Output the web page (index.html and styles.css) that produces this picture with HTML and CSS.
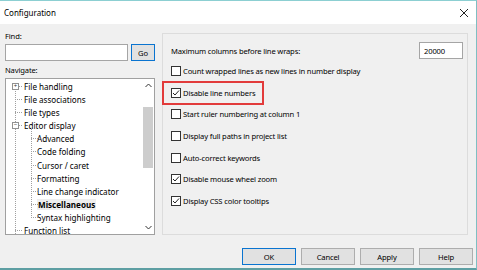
FILE: index.html
```html
<!DOCTYPE html>
<html lang="en">
<head>
    <meta charset="UTF-8">
    <title>Configuration</title>
    <link rel="stylesheet" href="styles.css">
</head>
<body>
    <div class="window">
        <div class="titlebar">
            <span class="title">Configuration</span>
            <span class="close">
                <svg width="10" height="10" viewBox="0 0 10 10"><path d="M1 1 L9 9 M9 1 L1 9" stroke="#222" stroke-width="1" fill="none"/></svg>
            </span>
        </div>

        <div class="main">
            <div class="nav">
                <div class="label">Find:</div>
                <div class="find-row">
                    <input class="textbox find-input" type="text">
                    <button class="btn btn-default go">Go</button>
                </div>
                <div class="label">Navigate:</div>

                <div class="tree">
                    <ul class="tree-list">
                        <li class="node"><span class="toggle">+</span>File handling</li>
                        <li class="node">File associations</li>
                        <li class="node">File types</li>
                        <li class="node"><span class="toggle">&minus;</span>Editor display</li>
                        <li>
                            <ul class="subtree">
                                <li class="node child">Advanced</li>
                                <li class="node child">Code folding</li>
                                <li class="node child">Cursor / caret</li>
                                <li class="node child">Formatting</li>
                                <li class="node child">Line change indicator</li>
                                <li class="node child"><span class="selected">Miscellaneous</span></li>
                                <li class="node child">Syntax highlighting</li>
                            </ul>
                        </li>
                        <li class="node">Function list</li>
                    </ul>
                    <div class="scrollbar">
                        <div class="arrow">
                            <svg width="7" height="5" viewBox="0 0 7 5"><path d="M0.5 4 L3.5 1 L6.5 4" stroke="#333" fill="none"/></svg>
                        </div>
                        <div class="track"><div class="thumb"></div></div>
                        <div class="arrow">
                            <svg width="7" height="5" viewBox="0 0 7 5"><path d="M0.5 1 L3.5 4 L6.5 1" stroke="#333" fill="none"/></svg>
                        </div>
                    </div>
                </div>
            </div>

            <div class="group">
                <div class="setting-row">
                    <span>Maximum columns before line wraps:</span>
                    <input class="textbox wrap-input" type="text" value="20000">
                </div>
                <ul class="options">
                    <li class="option"><span class="check"></span>Count wrapped lines as new lines in number display</li>
                    <li class="option">
                        <span class="check checked"><svg width="8" height="8" viewBox="0 0 8 8"><path d="M1 4 L3 6 L7 1.5" stroke="#222" fill="none"/></svg></span>Disable line numbers
                        <span class="highlight"></span>
                    </li>
                    <li class="option"><span class="check"></span>Start ruler numbering at column 1</li>
                    <li class="option"><span class="check"></span>Display full paths in project list</li>
                    <li class="option"><span class="check"></span>Auto-correct keywords</li>
                    <li class="option"><span class="check checked"><svg width="8" height="8" viewBox="0 0 8 8"><path d="M1 4 L3 6 L7 1.5" stroke="#222" fill="none"/></svg></span>Disable mouse wheel zoom</li>
                    <li class="option"><span class="check checked"><svg width="8" height="8" viewBox="0 0 8 8"><path d="M1 4 L3 6 L7 1.5" stroke="#222" fill="none"/></svg></span>Display CSS color tooltips</li>
                </ul>
            </div>
        </div>

        <div class="footer">
            <button class="btn btn-default">OK</button>
            <button class="btn">Cancel</button>
            <button class="btn">Apply</button>
            <button class="btn">Help</button>
        </div>
    </div>
</body>
</html>
```

FILE: styles.css
```css
* {
    margin: 0;
    padding: 0;
    box-sizing: border-box;
}

body {
    font-family: "Noto Sans", "Open Sans", sans-serif;
    font-size: 7.6px;
    letter-spacing: -0.15px;
    color: #000;
    background: #fff;
}

.window {
    width: 477px;
    height: 270px;
    display: flex;
    flex-direction: column;
    background: #f0f0f0;
    border-top: 1px solid #8ccfd2;
    border-right: 1px solid #7fbfc3;
    border-bottom: 2px solid #5e9fa3;
}

.titlebar {
    height: 23px;
    background: #fff;
    display: flex;
    align-items: center;
    justify-content: space-between;
    padding: 0 4px 0 4px;
}

.title {
    font-size: 8px;
    letter-spacing: 0;
}

.close {
    display: flex;
    margin-right: 3px;
}

.main {
    height: 211px;
    display: flex;
}

.nav {
    width: 150px;
    margin-left: 5px;
    padding-top: 6px;
}

.label {
    height: 13px;
    line-height: 13px;
}

.find-row {
    display: flex;
    gap: 3px;
    margin: 1px 0 3px;
}

.textbox {
    height: 17px;
    border: 1px solid #a5a5a5;
    background: #fff;
    font: inherit;
    letter-spacing: inherit;
    padding: 0 4px;
    outline: none;
}

.find-input {
    width: 123px;
}

.btn {
    height: 17px;
    width: 54px;
    font: inherit;
    letter-spacing: inherit;
    color: #000;
    background: #e1e1e1;
    border: 1px solid #adadad;
}

.btn-default {
    border-color: #0a74d0;
}

.go {
    width: 24px;
}

.tree {
    margin-top: 1px;
    height: 157px;
    display: flex;
    background: #fff;
    border: 1px solid #a0a0a0;
    overflow: hidden;
    font-size: 8.1px;
    letter-spacing: 0;
}

.tree-list {
    flex: 1;
    list-style: none;
    padding-top: 1px;
    position: relative;
}

.tree-list::before {
    content: "";
    position: absolute;
    left: 9px;
    top: 7px;
    bottom: 0;
    border-left: 1px dotted #a0a0a0;
}

.subtree {
    list-style: none;
    position: relative;
}

.subtree::before {
    content: "";
    position: absolute;
    left: 25px;
    top: -4px;
    bottom: 6px;
    border-left: 1px dotted #a0a0a0;
}

.node {
    position: relative;
    height: 13.1px;
    line-height: 13px;
    padding-left: 18px;
    white-space: nowrap;
}

.node::before {
    content: "";
    position: absolute;
    left: 9px;
    top: 6px;
    width: 7px;
    border-top: 1px dotted #a0a0a0;
}

.node.child {
    padding-left: 31px;
}

.node.child::before {
    left: 25px;
}

.toggle {
    position: absolute;
    left: 6px;
    top: 3px;
    width: 7px;
    height: 7px;
    border: 1px solid #919191;
    background: #fff;
    font-size: 6px;
    line-height: 5px;
    text-align: center;
    color: #333;
    z-index: 1;
}

.selected {
    font-weight: bold;
    background: #eeeeee;
    padding: 0 1px;
}

.scrollbar {
    width: 12px;
    display: flex;
    flex-direction: column;
    background: #fff;
}

.arrow {
    height: 13px;
    display: flex;
    align-items: center;
    justify-content: center;
}

.track {
    flex: 1;
}

.thumb {
    margin: 15px auto 0;
    width: 10px;
    height: 61px;
    background: #cdcdcd;
}

.group {
    margin: 9px 0 0 7px;
    width: 306px;
    height: 202px;
    border: 1px solid #dcdcdc;
    padding: 8px 4px 0 8px;
}

.setting-row {
    display: flex;
    justify-content: space-between;
    align-items: center;
}

.wrap-input {
    width: 44px;
    height: 17px;
}

.options {
    list-style: none;
    margin-top: 1px;
}

.option {
    position: relative;
    height: 21.7px;
    display: flex;
    align-items: center;
    gap: 2px;
}

.check {
    width: 10px;
    height: 10px;
    border: 1px solid #333;
    background: #fff;
    display: flex;
    align-items: center;
    justify-content: center;
}

.highlight {
    position: absolute;
    left: -9px;
    top: -1px;
    width: 102px;
    height: 24px;
    border: 2px solid #e23b3b;
}

.footer {
    display: flex;
    justify-content: flex-end;
    gap: 5px;
    padding: 13px 3px 0 0;
}
```
